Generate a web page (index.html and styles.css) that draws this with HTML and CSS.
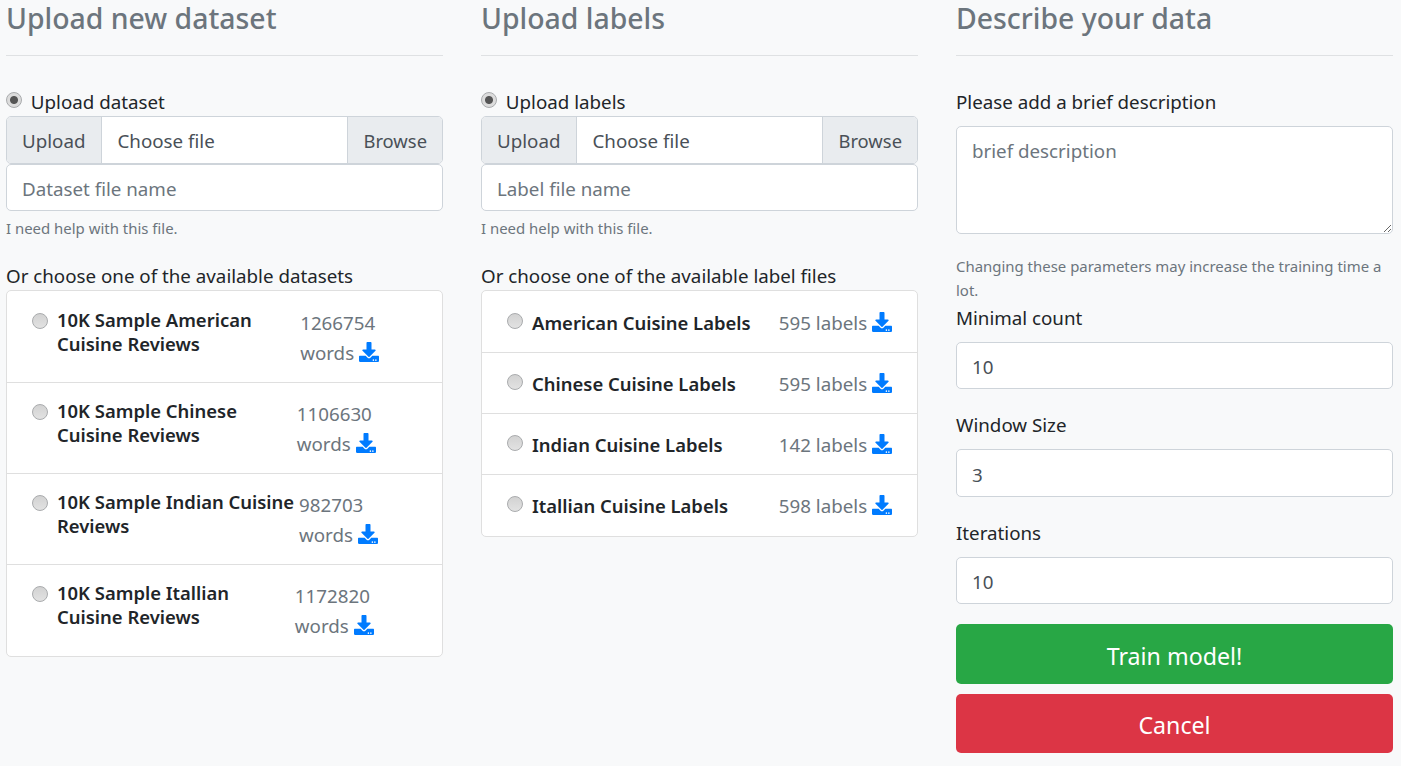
FILE: index.html
```html
<!DOCTYPE html>
<html lang="en">
<head>
    <meta charset="UTF-8">
    <meta name="viewport" content="width=device-width, initial-scale=1.0">
    <title>Upload dataset</title>
    <link rel="stylesheet" href="styles.css">
</head>
<body>

<svg class="icon-defs" aria-hidden="true">
    <symbol id="icon-download" viewBox="0 0 512 512">
        <path d="M216 0h80c13.3 0 24 10.7 24 24v168h87.7c17.8 0 26.7 21.5 14.1 34.1L269.7 378.3c-7.5 7.5-19.8 7.5-27.3 0L90.1 226.1c-12.6-12.6-3.7-34.1 14.1-34.1H192V24c0-13.3 10.7-24 24-24zm296 376v112c0 13.3-10.7 24-24 24H24c-13.3 0-24-10.7-24-24V376c0-13.3 10.7-24 24-24h146.7l49 49c20.1 20.1 52.5 20.1 72.6 0l49-49H488c13.3 0 24 10.7 24 24zm-124 88c0-11-9-20-20-20s-20 9-20 20 9 20 20 20 20-9 20-20zm64 0c0-11-9-20-20-20s-20 9-20 20 9 20 20 20 20-9 20-20z"/>
    </symbol>
</svg>

<main class="columns">

    <section class="column">
        <h2 class="column-title">Upload new dataset</h2>
        <hr class="rule">
        <label class="radio-line"><input type="radio" name="dataset" checked> Upload dataset</label>
        <div class="file-group">
            <span class="addon addon-left">Upload</span>
            <span class="file-name">Choose file</span>
            <span class="addon addon-right">Browse</span>
        </div>
        <input class="field" type="text" placeholder="Dataset file name">
        <p class="help">I need help with this file.</p>
        <p class="list-label">Or choose one of the available datasets</p>
        <ul class="file-list">
            <li class="file-row">
                <input type="radio" name="dataset">
                <span class="file-title">10K Sample American Cuisine Reviews</span>
                <span class="file-count">1266754 words <svg class="icon"><use href="#icon-download"/></svg></span>
            </li>
            <li class="file-row">
                <input type="radio" name="dataset">
                <span class="file-title">10K Sample Chinese Cuisine Reviews</span>
                <span class="file-count">1106630 words <svg class="icon"><use href="#icon-download"/></svg></span>
            </li>
            <li class="file-row">
                <input type="radio" name="dataset">
                <span class="file-title">10K Sample Indian Cuisine Reviews</span>
                <span class="file-count">982703 words <svg class="icon"><use href="#icon-download"/></svg></span>
            </li>
            <li class="file-row">
                <input type="radio" name="dataset">
                <span class="file-title">10K Sample Itallian Cuisine Reviews</span>
                <span class="file-count">1172820 words <svg class="icon"><use href="#icon-download"/></svg></span>
            </li>
        </ul>
    </section>

    <section class="column">
        <h2 class="column-title">Upload labels</h2>
        <hr class="rule">
        <label class="radio-line"><input type="radio" name="labels" checked> Upload labels</label>
        <div class="file-group">
            <span class="addon addon-left">Upload</span>
            <span class="file-name">Choose file</span>
            <span class="addon addon-right">Browse</span>
        </div>
        <input class="field" type="text" placeholder="Label file name">
        <p class="help">I need help with this file.</p>
        <p class="list-label">Or choose one of the available label files</p>
        <ul class="file-list">
            <li class="file-row label-row">
                <input type="radio" name="labels">
                <span class="file-title">American Cuisine Labels</span>
                <span class="file-count">595 labels <svg class="icon"><use href="#icon-download"/></svg></span>
            </li>
            <li class="file-row label-row">
                <input type="radio" name="labels">
                <span class="file-title">Chinese Cuisine Labels</span>
                <span class="file-count">595 labels <svg class="icon"><use href="#icon-download"/></svg></span>
            </li>
            <li class="file-row label-row">
                <input type="radio" name="labels">
                <span class="file-title">Indian Cuisine Labels</span>
                <span class="file-count">142 labels <svg class="icon"><use href="#icon-download"/></svg></span>
            </li>
            <li class="file-row label-row">
                <input type="radio" name="labels">
                <span class="file-title">Itallian Cuisine Labels</span>
                <span class="file-count">598 labels <svg class="icon"><use href="#icon-download"/></svg></span>
            </li>
        </ul>
    </section>

    <section class="column">
        <h2 class="column-title">Describe your data</h2>
        <hr class="rule">
        <label class="field-label" for="description">Please add a brief description</label>
        <textarea class="field field-area" id="description" placeholder="brief description"></textarea>
        <p class="help help-params">Changing these parameters may increase the training time a lot.</p>
        <label class="field-label" for="minCount">Minimal count</label>
        <input class="field field-spaced" id="minCount" type="text" value="10">
        <label class="field-label" for="windowSize">Window Size</label>
        <input class="field field-spaced" id="windowSize" type="text" value="3">
        <label class="field-label" for="iterations">Iterations</label>
        <input class="field" id="iterations" type="text" value="10">
        <button class="btn btn-train" type="button">Train model!</button>
        <button class="btn btn-cancel" type="button">Cancel</button>
    </section>

</main>

</body>
</html>
```

FILE: styles.css
```css
/* Bootstrap-like look, scaled up */
* {
    box-sizing: border-box;
}
body {
    margin: 0;
    font-family: "Noto Sans", "Open Sans", sans-serif;
    font-size: 18.75px;
    line-height: 30px;
    background-color: #f8f9fa;
    color: #212529;
}
.icon-defs {
    display: none;
}
.columns {
    display: flex;
    gap: 38px;
    padding: 0 8px 0 6px;
}
.column {
    flex: 1 1 0;
    min-width: 0;
}
.column-title {
    margin: 0;
    height: 38px;
    font-size: 28.4px;
    line-height: 36px;
    font-weight: 500;
    color: #6c757d;
}
.rule {
    margin: 17px 0 31px;
    border: 0;
    border-top: 1px solid #dfe1e3;
}

/* radios */
input[type="radio"] {
    appearance: none;
    flex: none;
    width: 16px;
    height: 16px;
    margin: 0;
    border: 1px solid #a9abad;
    border-radius: 50%;
    background: linear-gradient(#d2d2d2, #e2e2e2);
}
input[type="radio"]:checked {
    background: radial-gradient(circle, #555 0 3.5px, #dcdcdc 4.5px);
}
.radio-line {
    display: block;
    height: 29px;
}
.radio-line input {
    margin-right: 4px;
    vertical-align: 1px;
}

/* upload group */
.file-group {
    display: flex;
    height: 48px;
    border: 1px solid #ced4da;
    border-radius: 5px;
    background-color: #fff;
    color: #495057;
    line-height: 48px;
}
.addon {
    background-color: #e9ecef;
}
.addon-left {
    padding: 0 16px 0 15px;
    border-right: 1px solid #ced4da;
    border-radius: 4px 0 0 4px;
}
.addon-right {
    padding: 0 15px;
    font-size: 18.4px;
    border-left: 1px solid #ced4da;
    border-radius: 0 4px 4px 0;
}
.file-name {
    flex: 1;
    padding: 0 15px;
}

/* inputs */
.field {
    display: block;
    width: 100%;
    height: 47px;
    padding: 2px 15px 0;
    border: 1px solid #ced4da;
    border-radius: 5px;
    background-color: #fff;
    font: inherit;
    color: #495057;
}
.field::placeholder {
    color: #6c757d;
    opacity: 1;
}
.field-area {
    height: 108px;
    padding-top: 9px;
}
.field-spaced {
    margin-bottom: 21px;
}
#windowSize {
    height: 48px;
}
.field-label {
    display: block;
    height: 30px;
    margin-bottom: 9px;
}
.help {
    margin: 0;
    padding-top: 5px;
    font-size: 14.95px;
    line-height: 24px;
    color: #6c757d;
}
.help-params {
    padding-top: 20px;
    margin-bottom: 1px;
}
.list-label {
    margin: 21px 0 0;
    height: 29px;
}

/* dataset and label lists */
.file-list {
    margin: 0;
    padding: 0;
    list-style: none;
    background-color: #fff;
    border: 1px solid #dfdfdf;
    border-radius: 5px;
}
.file-row {
    display: flex;
    padding: 16px 29px 14px 25px;
    border-bottom: 1px solid #dfdfdf;
}
.file-row:first-child {
    padding-top: 17px;
}
.file-row:last-child {
    padding-bottom: 15px;
    border-bottom: 0;
}
.file-row input {
    margin: 5px 9px 0 0;
}
.file-title {
    font-size: 18.45px;
    line-height: 24px;
    font-weight: 600;
}
.file-count {
    color: #6c757d;
}
.label-row {
    padding-right: 25px;
}
.label-row .file-title {
    flex: 1;
    line-height: 30px;
}
.icon {
    width: 20px;
    height: 20px;
    vertical-align: -2px;
    fill: #007bff;
}

/* buttons */
.btn {
    display: block;
    width: 100%;
    padding: 3px 0 0;
    border: 0;
    border-radius: 5px;
    font: inherit;
    font-size: 23.2px;
    color: #fff;
}
.btn-train {
    height: 60px;
    margin-top: 20px;
    background-color: #28a745;
}
.btn-cancel {
    height: 59px;
    margin-top: 10px;
    background-color: #dc3545;
}
```
